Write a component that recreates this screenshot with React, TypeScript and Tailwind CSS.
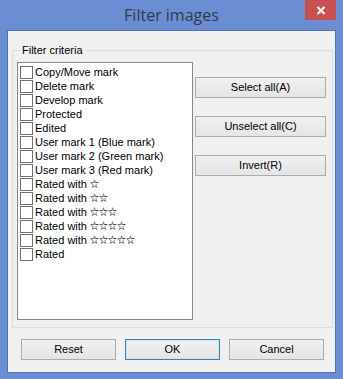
import React from "react";

const items = [
  "Copy/Move mark",
  "Delete mark",
  "Develop mark",
  "Protected",
  "Edited",
  "User mark 1 (Blue mark)",
  "User mark 2 (Green mark)",
  "User mark 3 (Red mark)",
  "Rated with ☆",
  "Rated with ☆☆",
  "Rated with ☆☆☆",
  "Rated with ☆☆☆☆",
  "Rated with ☆☆☆☆☆",
  "Rated",
];

function Label({ text }: { text: string }) {
  const idx = text.indexOf("☆");
  if (idx < 0) return <span>{text}</span>;
  return (
    <span className="flex items-center">
      <span className="whitespace-pre">{text.slice(0, idx)}</span>
      <span className="text-[9px] leading-[14px] text-black font-['Noto_Sans_CJK_JP',sans-serif] font-bold tracking-normal">
        {text.slice(idx)}
      </span>
    </span>
  );
}

function Btn({ children, def }: { children: React.ReactNode; def?: boolean }) {
  return (
    <div
      className={`flex items-center justify-center h-[21px] border ${
        def ? "border-[#3c7fb1] shadow-[inset_0_0_0_1px_#cfe6f7]" : "border-[#acacac]"
      } bg-gradient-to-b from-[#f0f0f0] to-[#e5e5e5] text-[11px] text-black`}
    >
      {children}
    </div>
  );
}

export default function App() {
  return (
    <div className="w-[343px] h-[379px] bg-[#6a8dd3] flex flex-col font-['Liberation_Sans',Arial,sans-serif] relative overflow-hidden">
      <div className="h-[30px] flex items-center justify-center">
        <span className="font-['Open_Sans',sans-serif] text-[16px] text-[#333b4a] -mt-[1px]">Filter images</span>
      </div>
      <div className="absolute right-[7px] top-0 w-[31px] h-[20px] bg-[#c75050] flex items-center justify-center">
        <svg width="10" height="9" viewBox="0 0 10 9">
          <path d="M1.5 1 L8.5 8 M8.5 1 L1.5 8" stroke="white" strokeWidth="2" />
        </svg>
      </div>
      <div className="ml-[7px] w-[329px] h-[343px] border border-[#4e73bd] bg-[#f0f0f0] flex flex-col">
        <div className="mt-[19px] ml-[4px] w-[321px] h-[278px] border border-[#d5dfe5] relative flex">
          <span className="absolute left-[7px] -top-[8px] px-[2px] bg-[#f0f0f0] text-[11px] leading-[14px] text-black">
            Filter criteria
          </span>
          <div className="ml-[4px] mt-[11px] w-[176px] h-[258px] border border-[#828790] bg-white pt-[2px] pl-[2px] flex flex-col">
            {items.map((t) => (
              <div key={t} className="h-[14px] flex items-center text-[11px] text-black leading-[14px]">
                <div className="w-[13px] h-[13px] border border-[#707070] bg-white mr-[2px] shrink-0" />
                <Label text={t} />
              </div>
            ))}
          </div>
          <div className="ml-[2px] mt-[26px] w-[131px] flex flex-col gap-[18px]">
            <Btn>Select all(A)</Btn>
            <Btn>Unselect all(C)</Btn>
            <Btn>Invert(R)</Btn>
          </div>
        </div>
        <div className="mt-[11px] ml-[13px] flex gap-[9px]">
          <div className="w-[95px]"><Btn>Reset</Btn></div>
          <div className="w-[95px]"><Btn def>OK</Btn></div>
          <div className="w-[95px]"><Btn>Cancel</Btn></div>
        </div>
      </div>
    </div>
  );
}
